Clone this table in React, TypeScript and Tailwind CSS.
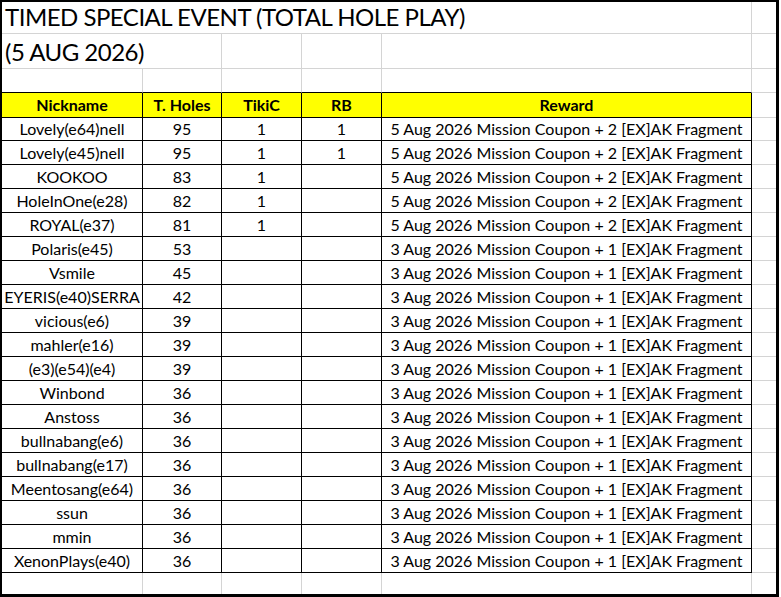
const rows: [string, string, string, string, string][] = [
  ['Lovely(e64)nell', '95', '1', '1', '5 Aug 2026 Mission Coupon + 2 [EX]AK Fragment'],
  ['Lovely(e45)nell', '95', '1', '1', '5 Aug 2026 Mission Coupon + 2 [EX]AK Fragment'],
  ['KOOKOO', '83', '1', '', '5 Aug 2026 Mission Coupon + 2 [EX]AK Fragment'],
  ['HoleInOne(e28)', '82', '1', '', '5 Aug 2026 Mission Coupon + 2 [EX]AK Fragment'],
  ['ROYAL(e37)', '81', '1', '', '5 Aug 2026 Mission Coupon + 2 [EX]AK Fragment'],
  ['Polaris(e45)', '53', '', '', '3 Aug 2026 Mission Coupon + 1 [EX]AK Fragment'],
  ['Vsmile', '45', '', '', '3 Aug 2026 Mission Coupon + 1 [EX]AK Fragment'],
  ['EYERIS(e40)SERRA', '42', '', '', '3 Aug 2026 Mission Coupon + 1 [EX]AK Fragment'],
  ['vicious(e6)', '39', '', '', '3 Aug 2026 Mission Coupon + 1 [EX]AK Fragment'],
  ['mahler(e16)', '39', '', '', '3 Aug 2026 Mission Coupon + 1 [EX]AK Fragment'],
  ['(e3)(e54)(e4)', '39', '', '', '3 Aug 2026 Mission Coupon + 1 [EX]AK Fragment'],
  ['Winbond', '36', '', '', '3 Aug 2026 Mission Coupon + 1 [EX]AK Fragment'],
  ['Anstoss', '36', '', '', '3 Aug 2026 Mission Coupon + 1 [EX]AK Fragment'],
  ['bullnabang(e6)', '36', '', '', '3 Aug 2026 Mission Coupon + 1 [EX]AK Fragment'],
  ['bullnabang(e17)', '36', '', '', '3 Aug 2026 Mission Coupon + 1 [EX]AK Fragment'],
  ['Meentosang(e64)', '36', '', '', '3 Aug 2026 Mission Coupon + 1 [EX]AK Fragment'],
  ['ssun', '36', '', '', '3 Aug 2026 Mission Coupon + 1 [EX]AK Fragment'],
  ['mmin', '36', '', '', '3 Aug 2026 Mission Coupon + 1 [EX]AK Fragment'],
  ['XenonPlays(e40)', '36', '', '', '3 Aug 2026 Mission Coupon + 1 [EX]AK Fragment'],
];

const headers = ['Nickname', 'T. Holes', 'TikiC', 'RB', 'Reward'];

// grid: A 141 | B 79 | C 80 | D 80 | E 370 | F rest
const cols = 'grid grid-cols-[141px_79px_80px_80px_370px_1fr]';

export default function App() {
  return (
    <div
      className="w-[779px] h-[597px] bg-white border-l-2 border-t-2 border-r-[3px] border-b-[3px] border-black overflow-hidden text-black"
      style={{ fontFamily: 'Lato, "Liberation Sans", sans-serif' }}
    >
      {/* row 1: title overflows across A..E */}
      <div className={`${cols} h-[32px]`}>
        <div className="col-span-5 border-b border-r border-[#d4d4d4] flex items-end pl-[3px] pb-[4px] text-[24px] tracking-[-0.5px] leading-none whitespace-nowrap">
          TIMED SPECIAL EVENT (TOTAL HOLE PLAY)
        </div>
        <div className="border-b border-[#d4d4d4]" />
      </div>

      {/* row 2: date overflows across A..B */}
      <div className={`${cols} h-[35px]`}>
        <div className="col-span-2 border-b border-r border-[#d4d4d4] flex items-center pl-[3px] pt-[1px] text-[24px] tracking-[-0.5px] leading-none whitespace-nowrap">
          (5 AUG 2026)
        </div>
        <div className="border-b border-r border-[#d4d4d4]" />
        <div className="border-b border-r border-[#d4d4d4]" />
        <div className="border-b border-r border-[#d4d4d4]" />
        <div className="border-b border-[#d4d4d4]" />
      </div>

      {/* row 3: blank, bottom edge is the table's top border */}
      <div className={`${cols} h-[24px]`}>
        <div className="border-b border-r border-b-black border-r-[#d4d4d4]" />
        <div className="border-b border-r border-b-black border-r-[#d4d4d4]" />
        <div className="border-b border-r border-b-black border-r-[#d4d4d4]" />
        <div className="border-b border-r border-b-black border-r-[#d4d4d4]" />
        <div className="border-b border-r border-b-black border-r-[#d4d4d4]" />
        <div className="border-b border-[#d4d4d4]" />
      </div>

      {/* header */}
      <div className={`${cols} h-[24px] text-[16px] font-bold`}>
        {headers.map(h => (
          <div key={h} className="bg-[#ffff00] border-b border-r border-black flex items-center justify-center whitespace-nowrap">
            {h}
          </div>
        ))}
        <div className="border-b border-[#d4d4d4]" />
      </div>

      {rows.map((r, i) => (
        <div key={i} className={`${cols} h-[24px] text-[16px]`}>
          {r.map((v, j) => (
            <div key={j} className="border-b border-r border-black flex items-center justify-center whitespace-nowrap overflow-hidden">
              {v}
            </div>
          ))}
          <div className="border-b border-[#d4d4d4]" />
        </div>
      ))}

      {/* trailing blank row */}
      <div className={`${cols} h-[21px]`}>
        <div className="border-r border-[#d4d4d4]" />
        <div className="border-r border-[#d4d4d4]" />
        <div className="border-r border-[#d4d4d4]" />
        <div className="border-r border-[#d4d4d4]" />
        <div className="border-r border-[#d4d4d4]" />
        <div />
      </div>
    </div>
  );
}
